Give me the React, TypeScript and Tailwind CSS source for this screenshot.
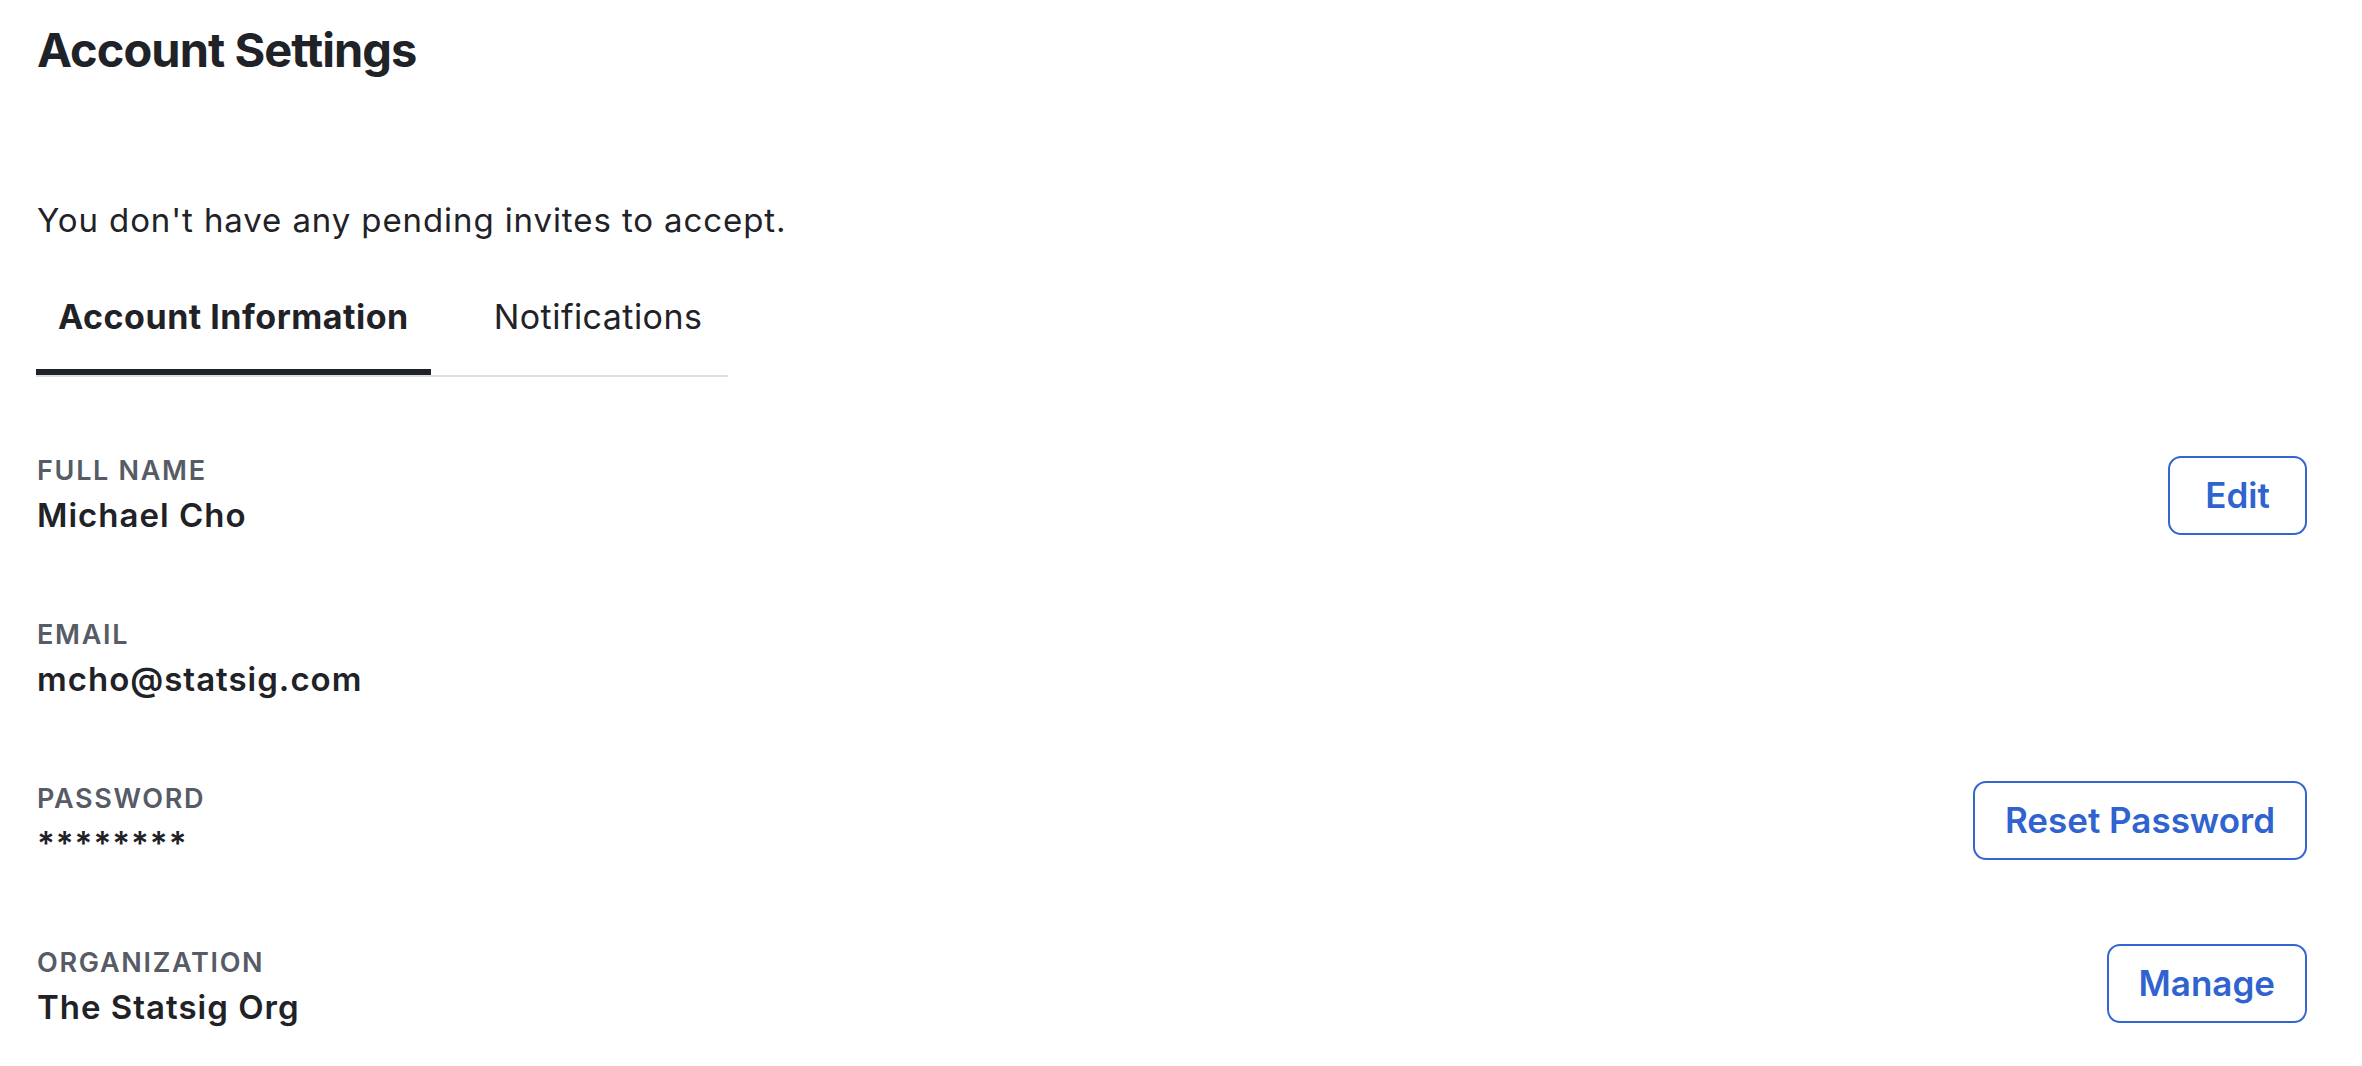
import React from "react";

const rows = [
  { label: "FULL NAME", value: "Michael Cho", action: "Edit", shift: "mb-0" },
  { label: "EMAIL", value: "mcho@statsig.com", action: null, shift: "mb-0" },
  { label: "PASSWORD", value: "********", action: "Reset Password", shift: "mb-[6px]" },
  { label: "ORGANIZATION", value: "The Statsig Org", action: "Manage", shift: "mb-[8px]" },
];

export default function App() {
  return (
    <div
      className="min-h-screen w-full bg-white pl-[37px] pr-[55px] text-[#1f2227]"
      style={{ fontFamily: "Inter, 'Noto Sans', sans-serif" }}
    >
      <h1 className="pt-[22px] text-[47px] leading-[56px] font-bold tracking-[-0.95px]">Account Settings</h1>

      <p className="mt-[118px] text-[33px] leading-[48px] tracking-[0.9px]">
        You don't have any pending invites to accept.
      </p>

      <div className="mt-[49px] -ml-[1px] flex w-[692px] gap-[41px] border-b-2 border-[#dcdfe6]">
        <button className="shrink-0 whitespace-nowrap border-b-[6px] border-[#1f2227] px-[22px] pb-[28px] text-[34px] leading-[48px] font-bold tracking-[0.5px]">
          Account Information
        </button>
        <button className="shrink-0 whitespace-nowrap border-b-[6px] border-transparent px-[22px] pb-[28px] text-[34px] leading-[48px] font-normal tracking-[0.45px]">
          Notifications
        </button>
      </div>

      <div className="mt-[74px] flex flex-col gap-[76px]">
        {rows.map((r) => (
          <div key={r.label} className="flex items-center justify-between">
            <div className="flex flex-col">
              <span className="whitespace-nowrap text-[27px] leading-[40px] font-semibold tracking-[1.7px] text-[#565b66]">
                {r.label}
              </span>
              <span className="whitespace-nowrap text-[33px] leading-[48px] font-semibold tracking-[1px] text-[#1f2227]">
                {r.value}
              </span>
            </div>
            {r.action && (
              <button
                className={`flex h-[79px] min-w-[139px] items-center justify-center whitespace-nowrap rounded-[13px] border-2 border-[#3466d1] px-[30px] text-[35px] font-semibold text-[#3063d0] ${r.shift}`}
              >
                {r.action}
              </button>
            )}
          </div>
        ))}
      </div>
    </div>
  );
}
